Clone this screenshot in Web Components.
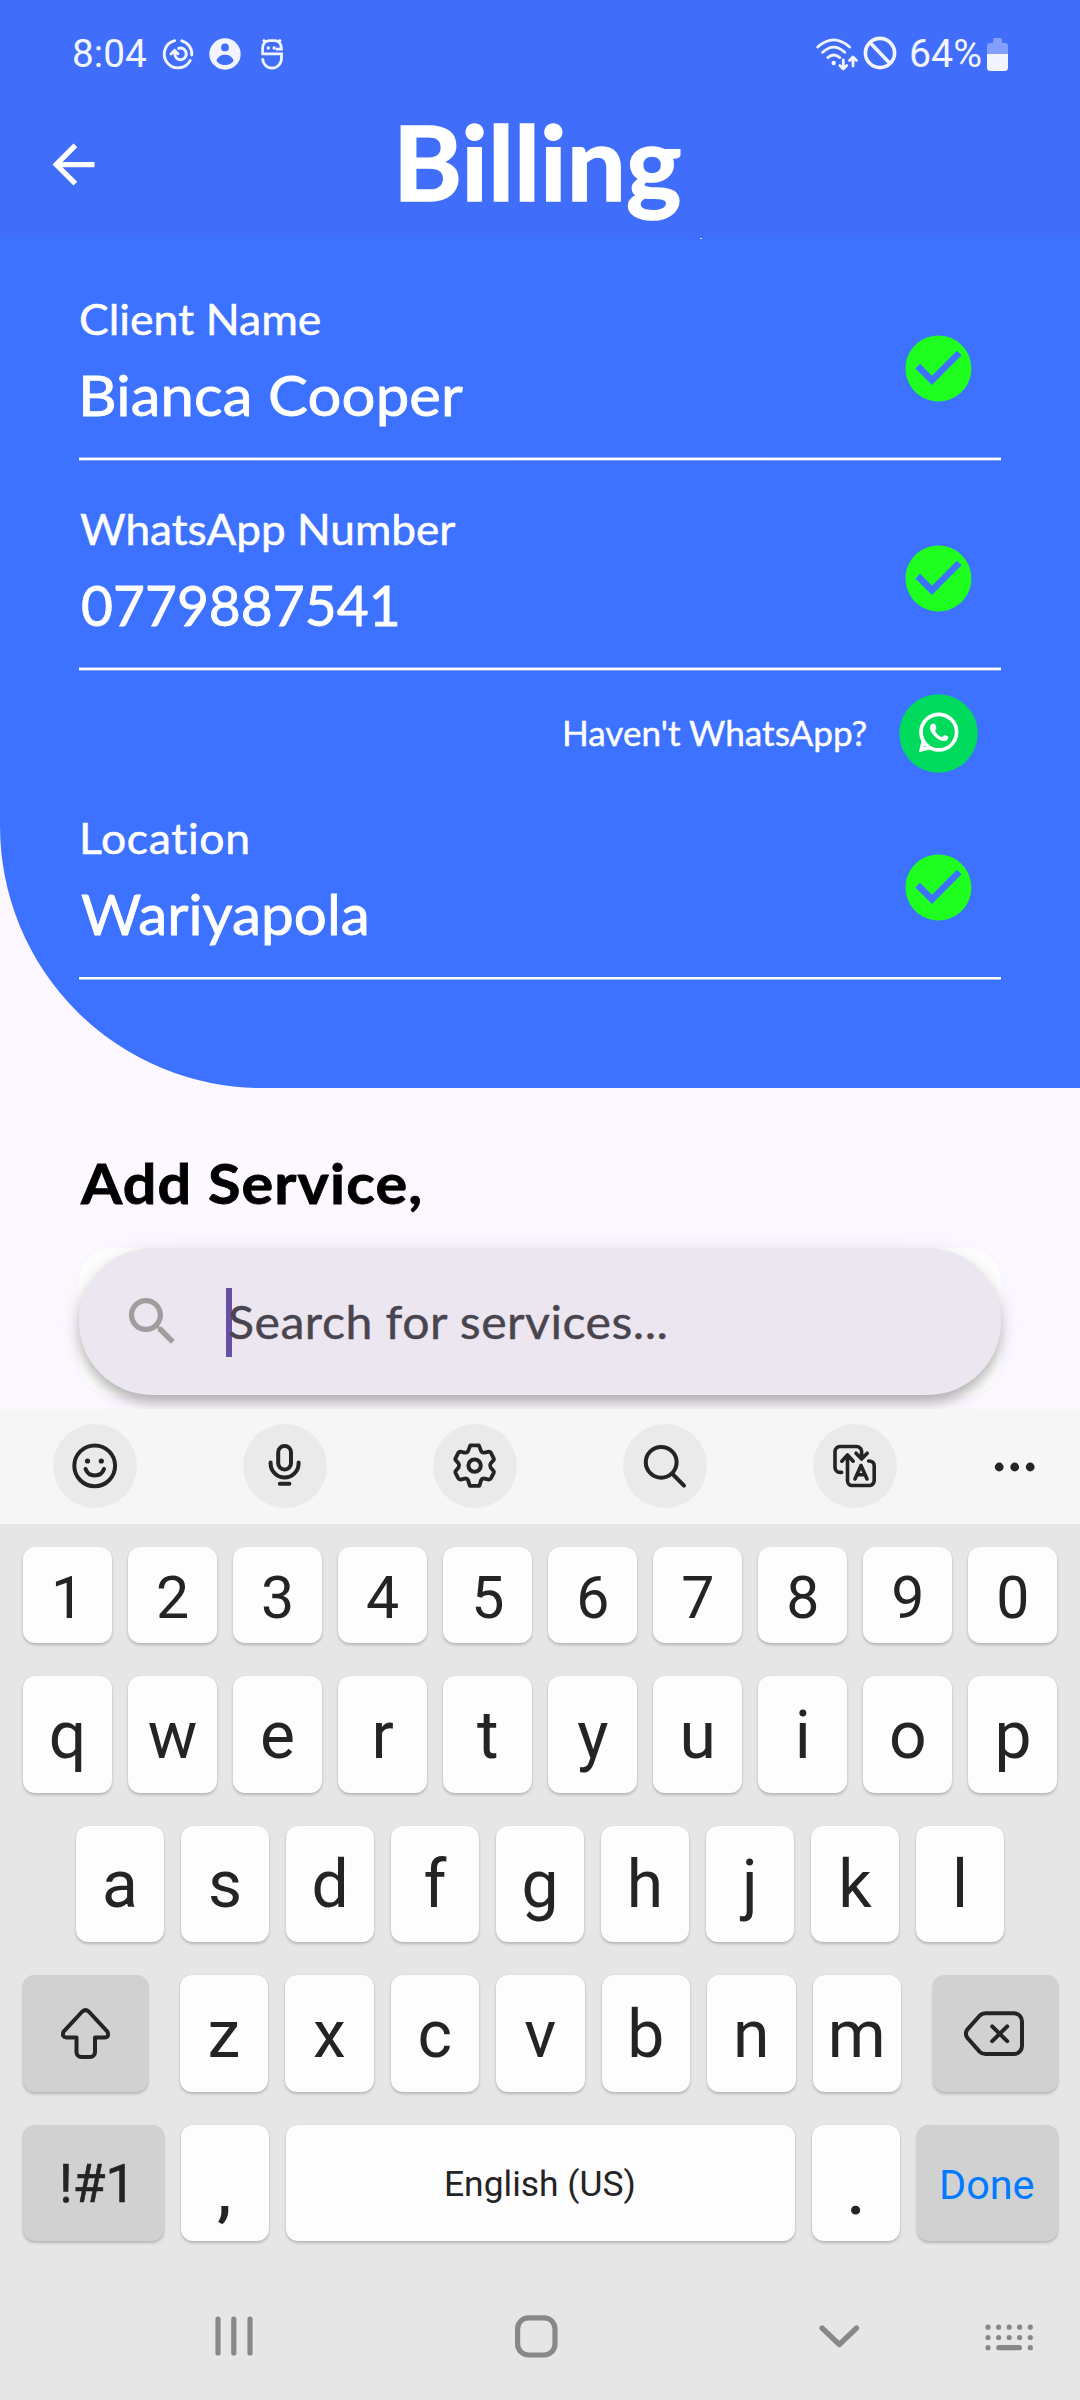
<!DOCTYPE html>
<html lang="en">
<head>
<meta charset="utf-8">
<title>Billing</title>
<style>
html,body{margin:0;padding:0}
body{width:1080px;height:2400px;overflow:hidden;background:#fdf7ff;font-family:Lato,"Open Sans",sans-serif}
</style>
</head>
<body>
<billing-screen></billing-screen>
<script>
const define = (name, html, init) => customElements.define(name, class extends HTMLElement {
  connectedCallback() {
    if (this.shadowRoot) return;
    const t = document.createElement('template');
    t.innerHTML = typeof html === 'function' ? html(this) : html;
    this.attachShadow({mode: 'open'}).appendChild(t.content.cloneNode(true));
    if (init) init(this);
  }
});

// Text whose width and tracking are tuned so its ink spans exactly `w` pixels.
define('ink-text', `<style>
:host{display:block;white-space:pre;font-kerning:normal}
span{display:block;transform-origin:0 50%}
</style><span><slot></slot></span>`, el => {
  const w = parseFloat(el.getAttribute('w'));
  const text = el.textContent;
  const cs = getComputedStyle(el);
  const ctx = document.createElement('canvas').getContext('2d');
  ctx.font = `${cs.fontWeight} ${cs.fontSize} ${cs.fontFamily}`;
  const m = ctx.measureText(text);
  const ink = m.actualBoundingBoxRight + m.actualBoundingBoxLeft;
  const k = Math.min(1.06, Math.max(0.97, w / ink));
  el.style.width = w + 'px';
  const s = el.shadowRoot.querySelector('span');
  s.style.letterSpacing = (w / k - ink) / (text.length - 1) + 'px';
  s.style.marginLeft = m.actualBoundingBoxLeft * k + 'px';
  s.style.transform = `scaleX(${k})`;
});

define('status-bar', `<style>
:host{display:flex;height:108px;box-sizing:border-box;padding:0 72px 0 74px;align-items:center;justify-content:space-between;font-family:Roboto,sans-serif;font-size:39.5px;line-height:108px;color:#f2f5ff}
div{display:flex;align-items:center}
svg{display:block;overflow:visible}
</style>
<div>
<ink-text w="72.5">8:04</ink-text>
<svg style="margin-left:15.5px" width="32" height="32" viewBox="-16 -16 32 32" fill="none" stroke="#f2f5ff" stroke-width="2.9" stroke-linecap="round"><path d="M-3.4-13.3A13.8 13.8 0 1 0 12.2 6.6M3.8-13.2A13.8 13.8 0 0 1 13.8 1"/><path d="M.6-5.6A5.8 5.8 0 1 1 .6 5.4Q-3.6 4-3.2-2.6M-7 0L-3.4-3.4L0-.2"/></svg>
<svg style="margin-left:15px" width="32" height="32" viewBox="-16 -16 32 32"><path fill="#f2f5ff" fill-rule="evenodd" d="M0-15.7A15.7 15.7 0 1 1 0 15.7A15.7 15.7 0 1 1 0-15.7ZM0-10.5A3.9 3.9 0 1 0 0-2.7A3.9 3.9 0 1 0 0-10.5ZM-8.6 6.6Q-6.5 11 0 11Q6.5 11 8.6 6.6Q6.5.8 0 .8Q-6.5.8-8.6 6.6Z"/></svg>
<svg style="margin-left:20px" width="23" height="32" viewBox="0 0 23 32" fill="none" stroke="#f2f5ff" stroke-width="2.7"><path d="M1.6 16V11Q1.6 2.6 8.5 2.6H13.5Q20.4 2.6 20.4 11.2H14.6M.4 15.8H20.5V20A9.4 10 0 0 1 1.6 20.3M2 1.6L5 4.6M19.8 1.6L17 4.6"/><g fill="#f2f5ff" stroke="none"><circle cx="7.3" cy="10" r="1.7"/><circle cx="13.1" cy="10" r="1.7"/></g></svg>
</div>
<div>
<svg style="margin-top:-2px" width="42" height="33" viewBox="0 0 42 33" fill="none" stroke="#f2f5ff" stroke-width="2.8" stroke-linecap="round" stroke-linejoin="round"><path d="M1.7 10Q17.7-4.2 33.6 10M6.6 15.3Q17.7 5 28.8 15.3M11.8 20.6Q17.7 15.4 23.8 20.6M27.3 23V31M23.8 28.5L27.3 32L30.8 28.5M37 29V20.5M33.5 23.5L37 20L40.5 23.5"/><circle cx="17.7" cy="26" r="2.2" fill="#f2f5ff" stroke="none"/></svg>
<svg style="margin:-3px 0 0 5px" width="34" height="34" viewBox="-17 -17 34 34" fill="none" stroke="#f2f5ff" stroke-width="3.6"><circle r="14.6"/><path d="M-10-10.5L10 10.5"/></svg>
<ink-text style="margin-left:14px" w="70">64%</ink-text>
<svg style="margin-left:6.5px" width="21" height="33" viewBox="0 0 21 33"><path fill="#839ffb" d="M6 5V2Q6 0 8 0H13Q15 0 15 2V5H18Q21 5 21 8V16H0V8Q0 5 3 5Z"/><path fill="#f2f5ff" d="M0 16H21V29.5Q21 33 17.5 33H3.5Q0 33 0 29.5Z"/></svg>
</div>`);

define('app-bar', `<style>
:host{display:grid;grid-template-columns:1fr auto 1fr;height:130px;color:#fff;align-items:start}
svg{display:block;margin:25px 0 0 42px}
ink-text{font-size:104px;line-height:124px;font-weight:700;margin-top:-9px;-webkit-text-stroke:1.6px #fff;margin-left:2px}
i{display:block;width:2px;height:1px;background:#cfdcff;margin:130px 0 0 19px}
</style>
<svg width="63" height="63" viewBox="0 0 24 24"><path fill="#fff" d="M20 11H7.83l5.59-5.59L12 4l-8 8 8 8 1.41-1.41L7.83 13H20v-2z"/></svg>
<ink-text w="279.5">Billing</ink-text><i></i>`);

define('billing-field', el => `<style>
:host{display:block;color:#fff}
.row{display:flex;justify-content:space-between;height:164px}
ink-text{-webkit-text-stroke:.5px #fff}
.l{font-size:42px;line-height:50px;margin-top:1px;margin-left:${el.getAttribute('lx')}px}
.v{font-size:56.5px;line-height:70px;margin:15px 0 0 ${el.getAttribute('vx')}px;-webkit-text-stroke-width:.8px}
svg{display:block;margin:36px 23.5px 0 0}
.line{height:4px;background:${el.hasAttribute('snap')
  ? 'linear-gradient(transparent 1px,#fff 1px 3px,#ffffff88 3px)'
  : 'linear-gradient(#ffffff70 1px,#fff 1px 3px,#ffffff50 3px)'}}
</style>
<div class="row"><div><ink-text class="l" w="${el.getAttribute('lw')}">${el.getAttribute('label')}</ink-text>
<ink-text class="v" w="${el.getAttribute('vw')}">${el.getAttribute('value')}</ink-text></div>
<svg width="79" height="79" viewBox="0 0 24 24"><path fill="#1fff1f" d="M12 2C6.48 2 2 6.48 2 12s4.48 10 10 10 10-4.48 10-10S17.52 2 12 2zm-2 15l-5-5 1.41-1.41L10 14.17l7.59-7.59L19 8l-9 9z"/></svg></div>
<div class="line"></div>`);

define('whatsapp-hint', `<style>
:host{display:flex;justify-content:flex-end;align-items:center;height:141px;box-sizing:border-box;padding:0 23.5px 17px 0;color:#fff}
ink-text{font-size:33.8px;line-height:44px;margin-right:32px;-webkit-text-stroke:.4px #fff}
svg{display:block}
</style>
<ink-text w="301.5">Haven't WhatsApp?</ink-text>
<svg width="79" height="79" viewBox="-39.5 -39.5 79 79"><circle r="39.3" fill="#00db5e"/><circle cx=".3" cy="-1.4" r="17.8" fill="none" stroke="#fff" stroke-width="3.7"/><path fill="#fff" d="M-19.6 18.8L-16.7 6.2L-13.2 9.2L-14.4 13.7L-9.5 12.3L-6.6 15.6Z"/><path fill="#fff" d="M-8.4-6.8Q-7.2-10.6-4.2-9.8Q-3.4-9.7-3-8.4Q-1.8-5.7-2.2-4.7L-3.4-2.7Q-1.5 1.8 3.2 3.7L5.4 2Q6.3 1.3 8.2 2.3Q10.2 3 9.9 4Q9.2 7.5 5.5 7.6Q1.3 7.8-4.4 2.2Q-9.4-3.3-8.4-6.8Z"/></svg>`);

define('billing-form', `<style>
:host{display:block;height:850px;box-sizing:border-box;padding:55px 79px 0;background:#3d71ff;border-bottom-left-radius:262px}
.gap{height:42px}
</style>
<billing-field label="Client Name" lw="239" lx="2" value="Bianca Cooper" vw="380" vx="4.5"></billing-field>
<div class="gap"></div>
<billing-field label="WhatsApp Number" lw="375" lx="1" value="0779887541" vw="315" vx="2.5"></billing-field>
<whatsapp-hint></whatsapp-hint>
<billing-field snap label="Location" lw="166" lx="3" value="Wariyapola" vw="285.5" vx="1.5"></billing-field>`);

define('service-search', `<style>
:host{display:block;height:321px;overflow:hidden;box-sizing:border-box;padding:61px 79px 0;background:#fdf7ff}
h2{margin:0 0 0 .5px;font-size:56px;line-height:68px;font-weight:700;color:#000;-webkit-text-stroke:.8px #000}
.card{height:147px;margin-top:31px;background:#fff;border-radius:34px;width:922px}
.pill{display:flex;align-items:center;height:147px;border-radius:73.5px;background:#ece6f0;box-shadow:0 8px 13px -1px rgba(0,0,0,.28),0 3px 30px rgba(0,0,0,.07)}
svg{margin-left:42px;flex:none}
i{width:6px;height:69px;background:#6750a4;margin:2px -3px 0 42px}
ink-text{font-size:45.5px;line-height:56px}
.hint{color:#49454f;-webkit-text-stroke:.4px #49454f}
</style>
<h2><ink-text style="font-size:inherit;line-height:inherit" w="340">Add Service,</ink-text></h2>
<div class="card"><div class="pill">
<svg width="63" height="63" viewBox="0 0 24 24"><path fill="#9e9e9e" d="M15.5 14h-.79l-.28-.27C15.41 12.59 16 11.11 16 9.5 16 5.91 13.09 3 9.5 3S3 5.91 3 9.5 5.91 16 9.5 16c1.61 0 3.09-.59 4.23-1.57l.27.28v.79l5 4.99L20.49 19l-4.99-5zm-6 0C7.01 14 5 11.99 5 9.5S7.01 5 9.5 5 14 7.01 14 9.5 11.99 14 9.5 14z"/></svg>
<i></i><ink-text class="hint" w="438">Search for services...</ink-text>
</div></div>`);

define('tool-button', `<style>
:host{display:block;width:84px;height:84px;border-radius:50%;background:#eaeaea}
::slotted(svg){display:block}
</style><slot></slot>`);

define('keyboard-toolbar', `<style>
:host{display:flex;height:115px;box-sizing:border-box;padding:15px 0 0 53px;gap:106px;background:#f6f6f6}
svg{fill:none;stroke:#242424;stroke-width:4;stroke-linecap:round;stroke-linejoin:round}
.f{fill:#242424;stroke:none}
.dots{margin:38px 0 0 -9px}
</style>
<tool-button><svg width="84" height="84"><circle cx="41.7" cy="41.8" r="20.4"/><path d="M32.6 45Q35 51.5 41.8 51.5T51 45"/><circle class="f" cx="34.5" cy="37" r="2.6"/><circle class="f" cx="48.3" cy="37" r="2.6"/></svg></tool-button>
<tool-button><svg width="84" height="84"><rect x="35.2" y="22" width="12.8" height="23.5" rx="6.2"/><path d="M27.6 38.6V39.5A14 14 0 0 0 55.6 39.5V38.6M36.8 59.7H46.4"/></svg></tool-button>
<tool-button><svg width="84" height="84"><g transform="translate(41.6 41.6)"><path stroke-width="3.8" d="M-4.3-20.2H4.3L6.5-14.5Q7.5-12.5 10-13L14.2-14Q15.6-14 16.3-12.8L19-7.5Q19.7-6 18.6-5L16-2Q14.8 0 16 2L18.6 5Q19.7 6 19 7.5L16.3 12.8Q15.6 14 14.2 14L10 13Q7.5 12.5 6.5 14.5L4.8 20.2H-4.8L-6.5 14.5Q-7.5 12.5-10 13L-14.2 14Q-15.6 14-16.3 12.8L-19 7.5Q-19.7 6-18.6 5L-16 2Q-14.8 0-16-2L-18.6-5Q-19.7-6-19-7.5L-16.3-12.8Q-15.6-14-14.2-14L-10-13Q-7.5-12.5-6.5-14.5Z"/><circle r="6.2"/></g></svg></tool-button>
<tool-button><svg width="84" height="84"><circle cx="38.2" cy="38.3" r="15.4"/><path d="M49.5 50L61 61.6"/></svg></tool-button>
<tool-button><svg width="84" height="84"><g transform="translate(20 19)"><path stroke-width="3.6" d="M8.6 29.4H7A5 5 0 0 1 2 24.4V8.5A5 5 0 0 1 7 3.5H23.6A5 5 0 0 1 28.6 8.5V15.5M23 10.2L28.6 16L34.2 10.2M8.8 18.2L14.5 12L20.2 18.2M14.5 13V38A4.5 4.5 0 0 0 19 42.5H36A5 5 0 0 0 41.2 37.5V23Q41.2 18 35.6 18M22 36L28 22.5L34 36M25 31.8H31"/></g></svg></tool-button>
<svg class="dots f" width="42" height="10"><circle class="f" cx="5.2" cy="5" r="4.4"/><circle class="f" cx="20.7" cy="5" r="4.4"/><circle class="f" cx="36.2" cy="5" r="4.4"/></svg>`);

define('key-cap', `<style>
:host{display:flex;align-items:center;justify-content:center;flex:1 1 0;min-width:0;height:100%;box-sizing:border-box;border-radius:12px;background:#fdfdfd;color:#242424;box-shadow:0 2px 3px rgba(0,0,0,.2),0 0 1px rgba(0,0,0,.12);font-family:Roboto,sans-serif}
:host([fn]){background:#d1d1d1}
</style><slot></slot>`);

const keys = s => [...s].map(c => `<key-cap>${c}</key-cap>`).join('');

define('key-board', `<style>
:host{display:block;height:773px;box-sizing:border-box;padding-top:23px;background:#e6e6e6}
.r{display:flex;box-sizing:border-box;padding:0 22.5px 0 23px;gap:16px;font-size:66px;line-height:80px;margin-bottom:33px;height:117px}
.n{height:96px;font-size:59px}
.n key-cap{padding-top:5px}
.q key-cap{padding-top:2px}
.a{height:116px;padding:0 76px;gap:17px}
.a key-cap,.z key-cap{padding-top:2px}
.z .s{padding-top:0}
.z{gap:17px}
.z .s{flex:0 0 124.5px}
.z .s:first-child{margin-right:15px}
.z .s:last-child{margin-left:15px}
.b{height:116px;gap:17px}
.b .w{flex:0 0 140.5px}
.b .p{flex:0 0 88px;font-weight:500;padding-top:17px}
svg{display:block;fill:none;stroke:#242424;stroke-width:4;stroke-linecap:round;stroke-linejoin:round}
</style>
<div class="r n">${keys('1234567890')}</div>
<div class="r q">${keys('qwertyuiop')}</div>
<div class="r a">${keys('asdfghjkl')}</div>
<div class="r z"><key-cap fn class="s"><svg width="49" height="51" viewBox="0 0 49 51"><path d="M21.3 3.5Q24.5 .8 27.7 3.5L46.4 23.6Q48.6 29.4 43.6 29.4H34V44A5 5 0 0 1 29 49H20.5A5 5 0 0 1 15.5 44V29.4H5.4Q.4 29 2.6 23.6Z"/></svg></key-cap>${keys('zxcvbnm')}<key-cap fn class="s"><svg style="margin-left:-2px" width="60" height="46" viewBox="0 0 60 46"><path d="M21.5 2.3H50A8 8 0 0 1 58 10.3V35A8 8 0 0 1 50 43H21.5Q18 43 15.8 40.8L3.5 27Q.3 22.7 3.5 18.3L15.8 4.5Q18 2.3 21.5 2.3ZM28.2 15.4L43.2 30.2M43.2 15.4L28.2 30.2"/></svg></key-cap></div>
<div class="r b"><key-cap fn class="w" style="font-size:53px;padding-top:2px;-webkit-text-stroke:.6px #242424"><ink-text w="61.5">!#1</ink-text></key-cap><key-cap class="p">,</key-cap><key-cap style="font-size:35px;padding-top:4px"><ink-text w="187.5">English (US)</ink-text></key-cap><key-cap class="p">.</key-cap><key-cap fn class="w" style="font-size:40.4px;padding-top:5px;color:#007bff"><ink-text w="91">Done</ink-text></key-cap></div>`);

define('nav-bar', `<style>
:host{display:grid;grid-template-columns:300px 304px 166px auto;height:103px;background:#e6e6e6;box-sizing:border-box;padding:18px 0 0 215px}
svg{display:block;fill:none;stroke:#888;stroke-width:5.2;stroke-linecap:round;stroke-linejoin:round}
</style>
<svg width="38" height="42"><path d="M3 4V38M18.8 4V38M35 4V38"/></svg>
<svg width="43" height="43"><rect x="2.6" y="2.8" width="37.4" height="37.2" rx="11"/></svg>
<svg width="41" height="43"><path d="M3 13L20.3 29.5L37.6 13"/></svg>
<svg width="49" height="43"><path d="M3 12.2h.01M13.6 12.2h.01M24.2 12.2h.01M34.6 12.2h.01M45.3 12.2h.01M3 22.5h.01M13.6 22.5h.01M24.2 22.5h.01M34.6 22.5h.01M45.3 22.5h.01M3 32.7h.01M13.8 32.7H34.4M45.3 32.7h.01"/></svg>`);

define('billing-screen', `<style>
:host{display:block;width:1080px;height:2400px;overflow:hidden}
header{background:#406df9;height:238px}
</style>
<header><status-bar></status-bar><app-bar></app-bar></header>
<billing-form></billing-form>
<service-search></service-search>
<keyboard-toolbar></keyboard-toolbar>
<key-board></key-board>
<nav-bar></nav-bar>`);
</script>
</body>
</html>
